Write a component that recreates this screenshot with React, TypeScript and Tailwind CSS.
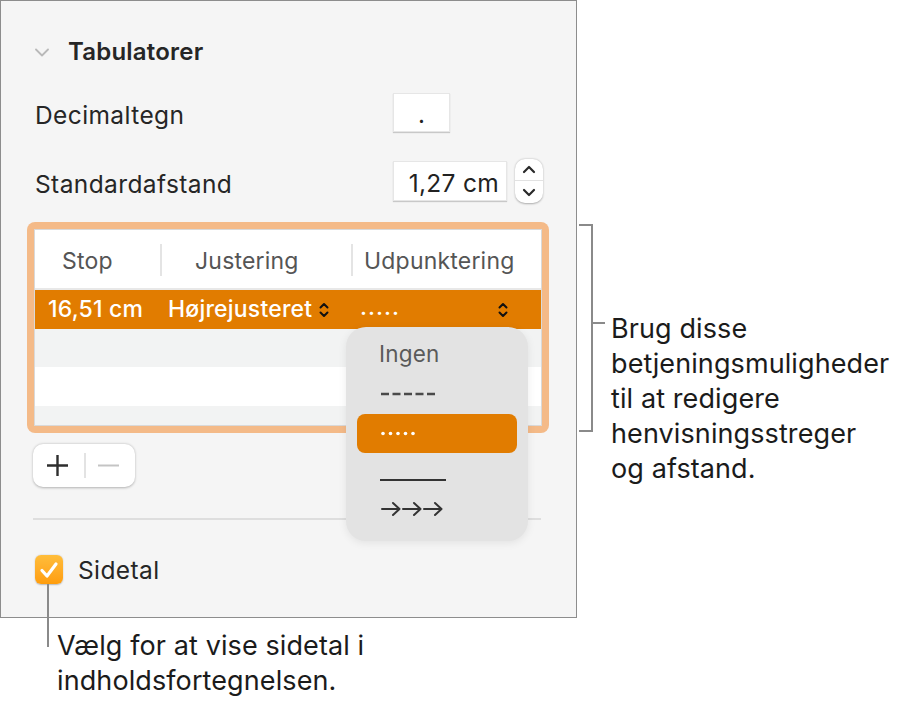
import React from "react";

function UpDown({ color = "#111" }: { color?: string }) {
  return (
    <svg width="10" height="18" viewBox="0 0 10 18" fill="none">
      <path d="M1.5 6.5 L5 3 L8.5 6.5" stroke={color} strokeWidth="2" strokeLinecap="round" strokeLinejoin="round" />
      <path d="M1.5 11.5 L5 15 L8.5 11.5" stroke={color} strokeWidth="2" strokeLinecap="round" strokeLinejoin="round" />
    </svg>
  );
}

function Panel() {
  return (
    <div className="relative w-[577px] h-[618px] shrink-0 border border-[#8d8d8d] bg-[#f5f5f5]">
      <div className="flex flex-col pl-[34px]">
        {/* Title */}
        <div className="mt-[33px] h-[36px] flex items-center">
          <svg width="14" height="9" viewBox="0 0 14 9" fill="none">
            <path d="M1 1.5 L7 7.5 L13 1.5" stroke="#b9b9b9" strokeWidth="1.8" strokeLinecap="round" strokeLinejoin="round" />
          </svg>
          <span className="ml-[19px] text-[24px] font-semibold tracking-[0.2px] text-[#262626]">Tabulatorer</span>
        </div>

        {/* Decimaltegn */}
        <div className="mt-[23px] h-[39px] flex items-center">
          <span className="w-[358px] pt-[6px] text-[24.5px] tracking-[0.4px] text-[#262626]">Decimaltegn</span>
          <div className="w-[57px] h-[39px] bg-white border border-[#e6e6e6] shadow-[0_1px_1px_rgba(0,0,0,0.18)] flex items-center justify-center pt-[4px] text-[24px] text-[#222]">
            .
          </div>
        </div>

        {/* Standardafstand */}
        <div className="mt-[27px] h-[44px] flex items-center">
          <span className="w-[358px] pt-[6px] text-[24.5px] tracking-[0.4px] text-[#262626]">Standardafstand</span>
          <div className="w-[114px] h-[40px] bg-white border border-[#e6e6e6] shadow-[0_1px_1px_rgba(0,0,0,0.18)] flex items-center justify-end pr-[7px] pt-[4px] text-[24.5px] tracking-[0.3px] text-[#222]">
            1,27 cm
          </div>
          <div className="ml-[8px] w-[28px] h-[44px] rounded-[10px] bg-white shadow-[0_0.5px_2px_rgba(0,0,0,0.3)] flex flex-col">
            <div className="h-[22px] flex items-center justify-center border-b border-[#e2e2e2]">
              <svg width="14" height="9" viewBox="0 0 14 9" fill="none">
                <path d="M2 7 L7 2 L12 7" stroke="#2a2a2a" strokeWidth="2.2" strokeLinecap="round" strokeLinejoin="round" />
              </svg>
            </div>
            <div className="h-[22px] flex items-center justify-center">
              <svg width="14" height="9" viewBox="0 0 14 9" fill="none">
                <path d="M2 2 L7 7 L12 2" stroke="#2a2a2a" strokeWidth="2.2" strokeLinecap="round" strokeLinejoin="round" />
              </svg>
            </div>
          </div>
        </div>

        {/* Table with focus ring */}
        <div className="mt-[19px] -ml-[8px] w-[522px] h-[211px] rounded-[8px] bg-[#f4ba88] p-[7px]">
          <div className="relative h-full bg-white border border-[#d9d9d9] overflow-hidden flex flex-col">
            <div className="relative h-[60px] shrink-0 border-b-2 border-[#e8e8e8] flex items-center pt-[4px] text-[23px] tracking-[0.2px] text-[#555]">
              <div className="w-[126px] pl-[27px]">Stop</div>
              <div className="w-[191px] pl-[34px]">Justering</div>
              <div className="w-[189px] pl-[12px]">Udpunktering</div>
              <div className="absolute left-[125px] top-[14px] w-[2px] h-[32px] bg-[#e4e4e4]" />
              <div className="absolute left-[316px] top-[14px] w-[2px] h-[32px] bg-[#e4e4e4]" />
            </div>
            <div className="h-[39px] shrink-0 bg-[#e17c00] flex items-center text-[23px] font-medium tracking-[0.2px] text-white">
              <div className="w-[126px] pl-[13px]">16,51 cm</div>
              <div className="w-[191px] pl-[7px] flex items-center">
                <span>Højrejusteret</span>
                <span className="ml-[7px] flex"><UpDown /></span>
              </div>
              <div className="w-[189px] pl-[8px] pr-[33px] flex items-center justify-between">
                <span className="-mt-[4px] tracking-[1px]">.....</span>
                <UpDown />
              </div>
            </div>
            <div className="h-[38px] shrink-0 bg-[#f2f3f3]" />
            <div className="h-[39px] shrink-0 bg-white" />
            <div className="flex-1 bg-[#f2f3f3]" />
          </div>
        </div>

        {/* + - buttons */}
        <div className="mt-[11px] -ml-[2px] w-[102px] h-[43px] bg-white rounded-[10px] shadow-[0_0.5px_2.5px_rgba(0,0,0,0.28)] flex items-center">
          <svg className="ml-[13px]" width="23" height="23" viewBox="0 0 23 23" fill="none">
            <path d="M11.5 1 V22 M1 11.5 H22" stroke="#2e2e2e" strokeWidth="2.4" />
          </svg>
          <div className="ml-[15px] w-[2px] h-[25px] bg-[#e3e3e3]" />
          <svg className="ml-[11px]" width="23" height="23" viewBox="0 0 23 23" fill="none">
            <path d="M1 11.5 H22" stroke="#c4c4c4" strokeWidth="2" />
          </svg>
        </div>

        {/* Divider */}
        <div className="mt-[31px] -ml-[2px] w-[508px] h-[2px] bg-[#dedede]" />

        {/* Sidetal */}
        <div className="mt-[35px] h-[29px] flex items-center">
          <div className="w-[28px] h-[29px] rounded-[6px] bg-gradient-to-b from-[#ffbd3a] to-[#ff9d0a] shadow-[0_0.5px_1.5px_rgba(0,0,0,0.25)] flex items-center justify-center">
            <svg width="20" height="18" viewBox="0 0 20 18" fill="none">
              <path d="M3 9.5 L8 15 L17 3" stroke="white" strokeWidth="3.2" strokeLinecap="round" strokeLinejoin="round" />
            </svg>
          </div>
          <span className="ml-[15px] pt-[2px] text-[24.5px] tracking-[0.4px] text-[#262626]">Sidetal</span>
        </div>
      </div>

      {/* Dropdown menu */}
      <div className="absolute left-[345px] top-[326px] w-[182px] h-[214px] rounded-[20px] bg-[#e3e3e3] shadow-[0_2px_8px_rgba(0,0,0,0.08)] flex flex-col">
        <div className="mt-[11px] h-[28px] pl-[33px] pt-[4px] flex items-center text-[22.5px] tracking-[0.2px] text-[#5a5a5a]">Ingen</div>
        <div className="mt-[14px] h-[28px] pl-[35px] flex items-center">
          <svg width="56" height="4" viewBox="0 0 56 4" fill="none">
            <path d="M0 2 H8 M11.5 2 H19.5 M23 2 H31 M34.5 2 H42.5 M46 2 H54" stroke="#4a4a4a" strokeWidth="2.4" />
          </svg>
        </div>
        <div className="mt-[6px] ml-[11px] w-[160px] h-[39px] rounded-[8px] bg-[#e17c00] flex items-center pl-[24px]">
          <svg width="34" height="5" viewBox="0 0 34 5" fill="none">
            <circle cx="2" cy="2.5" r="1.8" fill="white" />
            <circle cx="9.5" cy="2.5" r="1.8" fill="white" />
            <circle cx="17" cy="2.5" r="1.8" fill="white" />
            <circle cx="24.5" cy="2.5" r="1.8" fill="white" />
            <circle cx="32" cy="2.5" r="1.8" fill="white" />
          </svg>
        </div>
        <div className="mt-[13px] h-[28px] pl-[34px] flex items-center">
          <svg width="67" height="4" viewBox="0 0 67 4" fill="none">
            <path d="M0 2 H66" stroke="#333" strokeWidth="2.2" />
          </svg>
        </div>
        <div className="mt-[1px] h-[28px] pl-[35px] flex items-center">
          <svg width="62" height="16" viewBox="0 0 62 16" fill="none">
            <path d="M1 8 H18 M12 2 L18.5 8 L12 14" stroke="#333" strokeWidth="2" strokeLinejoin="round" strokeLinecap="round" />
            <path d="M22 8 H39 M33 2 L39.5 8 L33 14" stroke="#333" strokeWidth="2" strokeLinejoin="round" strokeLinecap="round" />
            <path d="M43 8 H60 M54 2 L60.5 8 L54 14" stroke="#333" strokeWidth="2" strokeLinejoin="round" strokeLinecap="round" />
          </svg>
        </div>
      </div>
    </div>
  );
}

export default function App() {
  return (
    <div className="relative w-[913px] h-[708px] bg-white overflow-hidden text-[#1b1b1b] font-['Inter',sans-serif]">
      <div className="flex items-start">
        <Panel />
        <div className="flex items-start">
          <div className="relative mt-[224px] ml-[2px] w-[14px] h-[208px] border-t-2 border-r-2 border-b-2 border-[#8a8a8a]">
            <div className="absolute -right-[14px] top-[96px] w-[12px] h-[2px] bg-[#8a8a8a]" />
          </div>
          <div className="mt-[311px] ml-[18px] text-[27px] leading-[35px] tracking-[0.1px] text-[#1b1b1b] whitespace-nowrap">
            Brug disse
            <br />
            betjeningsmuligheder
            <br />
            til at redigere
            <br />
            henvisningsstreger
            <br />
            og afstand.
          </div>
        </div>
      </div>
      <div className="ml-[57px] mt-[10px] text-[27px] leading-[35px] tracking-[0.1px] text-[#1b1b1b] whitespace-nowrap">
        Vælg for at vise sidetal i
        <br />
        indholdsfortegnelsen.
      </div>
      <div className="absolute left-[47px] top-[584px] w-[2px] h-[63px] bg-[#8a8a8a]" />
    </div>
  );
}
